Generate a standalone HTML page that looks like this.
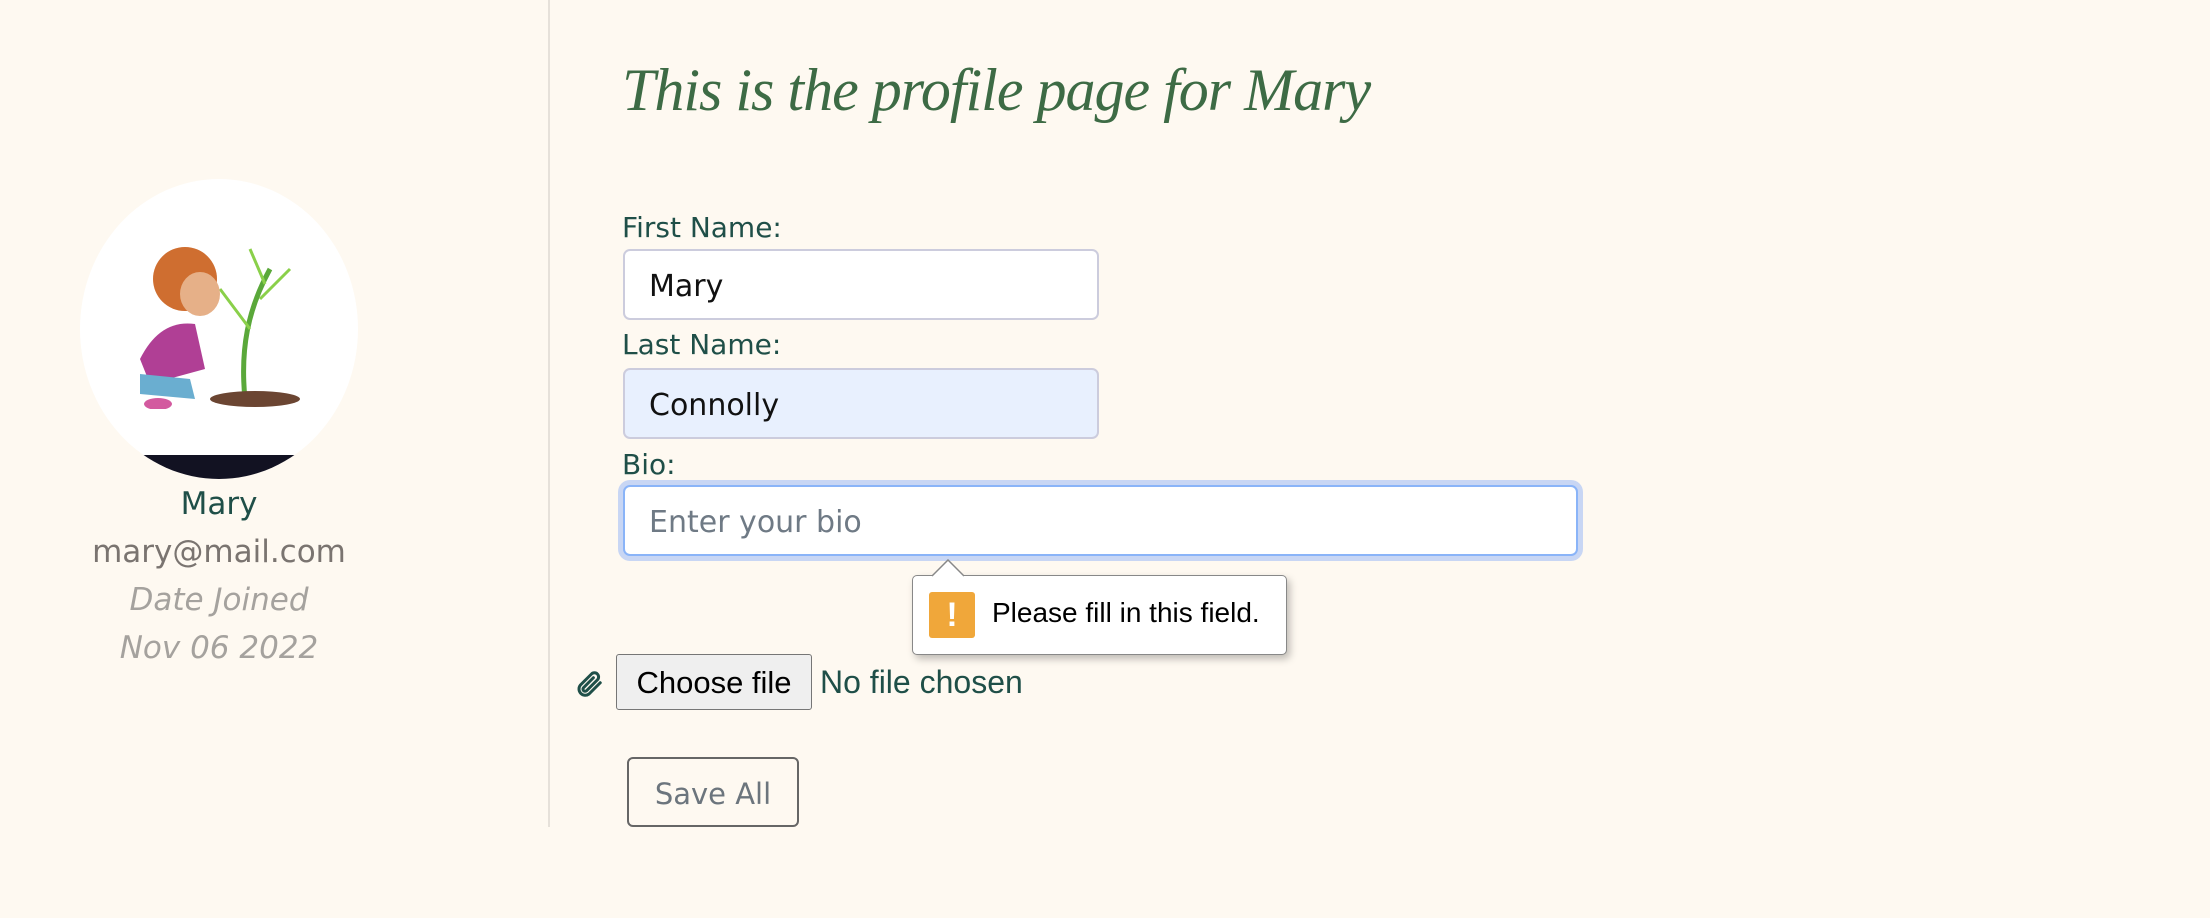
<!DOCTYPE html>
<html><head><style>
body{margin:0;width:2210px;height:918px;background:#fef9f1;position:relative;overflow:hidden;font-family:"DejaVu Sans","Liberation Sans",sans-serif;}
.a{position:absolute;}
.divider{left:548px;top:0;width:2px;height:827px;background:#e6e1da;}
h1{position:absolute;left:622px;top:56px;margin:0;font:italic 60px "Liberation Serif",cursive;color:#3d6b45;letter-spacing:-1px;}
.lbl{position:absolute;left:622px;font-size:28px;color:#1f4f48;}
.inp{position:absolute;left:623px;width:476px;height:71px;border:2px solid #ccd;border-radius:7px;background:#fff;box-sizing:border-box;font-size:30px;padding-left:24px;line-height:71px;color:#111;}
</style></head><body>
<div class="a divider"></div>
<div class="a" style="left:80px;top:179px;width:278px;height:300px;border-radius:50%;background:#fff;overflow:hidden">
 <div class="a" style="left:0;top:276px;width:278px;height:30px;background:#121222"></div>
 <svg class="a" style="left:40px;top:30px" width="200" height="200" viewBox="0 0 200 200">
  <path d="M125 190 C120 140 128 100 150 60" stroke="#5aa83a" stroke-width="5" fill="none"/>
  <path d="M130 120 L100 80 M140 90 L170 60 M145 75 L130 40" stroke="#8ad04a" stroke-width="3" fill="none"/>
  <ellipse cx="135" cy="190" rx="45" ry="8" fill="#6b4532"/>
  <circle cx="65" cy="70" r="32" fill="#cf6e30"/>
  <ellipse cx="80" cy="85" rx="20" ry="22" fill="#e6b088"/>
  <path d="M20 150 Q40 110 75 115 L85 160 L30 175Z" fill="#b03f95"/>
  <path d="M20 165 L70 170 L75 190 L20 185Z" fill="#6aaed0"/>
  <ellipse cx="38" cy="195" rx="14" ry="6" fill="#d35a9f"/>
 </svg>
</div>
<div class="a" style="left:80px;top:486px;width:278px;text-align:center;font-size:31px;color:#1f4f48">Mary</div>
<div class="a" style="left:40px;top:534px;width:358px;text-align:center;font-size:31px;color:#7a7470">mary@mail.com</div>
<div class="a" style="left:40px;top:582px;width:358px;text-align:center;font-size:31px;color:#a5a29e;font-style:italic">Date Joined</div>
<div class="a" style="left:40px;top:630px;width:358px;text-align:center;font-size:31px;color:#a5a29e;font-style:italic">Nov 06 2022</div>

<h1>This is the profile page for Mary</h1>
<div class="lbl" style="top:211px">First Name:</div>
<div class="inp" style="top:249px">Mary</div>
<div class="lbl" style="top:328px">Last Name:</div>
<div class="inp" style="top:368px;background:#e8f0fe">Connolly</div>
<div class="lbl" style="top:448px">Bio:</div>
<div class="inp" style="top:485px;width:955px;border-color:#8ab4f8;box-shadow:0 0 0 5px #c8d6f4;color:#6f7a85">Enter your bio</div>

<div class="a" style="left:912px;top:575px;width:375px;height:80px;background:#fff;border:1.5px solid #888;border-radius:5px;box-sizing:border-box;box-shadow:3px 4px 8px rgba(0,0,0,.25)">
 <div class="a" style="left:16px;top:16px;width:46px;height:46px;background:#f0a73a;border-radius:3px;color:#fff;font:bold 34px 'Liberation Sans';text-align:center;line-height:46px">!</div>
 <div class="a" style="left:79px;top:21px;font:28px 'Liberation Sans',sans-serif;color:#000">Please fill in this field.</div>
</div>
<svg class="a" style="left:932px;top:559px" width="32" height="18"><path d="M0 17 L16 1 L32 17" fill="#fff" stroke="#888" stroke-width="1.5"/></svg>

<svg class="a" style="left:574px;top:667px" width="30" height="34" viewBox="0 0 24 24"><path d="M21 11 L12 20 a5 5 0 0 1 -7 -7 L14 4 a3.3 3.3 0 0 1 4.7 4.7 L10 17.4 a1.7 1.7 0 0 1 -2.4 -2.4 L15.5 7" fill="none" stroke="#1f4f48" stroke-width="2.4" stroke-linecap="round"/></svg>
<div class="a" style="left:616px;top:654px;width:196px;height:56px;background:#efefef;border:1.5px solid #767676;border-radius:3px;box-sizing:border-box;font:31px 'Liberation Sans',sans-serif;text-align:center;line-height:56px;color:#000">Choose file</div>
<div class="a" style="left:820px;top:664px;font:32px 'Liberation Sans',sans-serif;color:#1f4f48">No file chosen</div>
<div class="a" style="left:627px;top:757px;width:172px;height:70px;border:2px solid #666;border-radius:6px;box-sizing:border-box;font-size:29px;text-align:center;line-height:70px;color:#6c757d">Save All</div>
</body></html>
